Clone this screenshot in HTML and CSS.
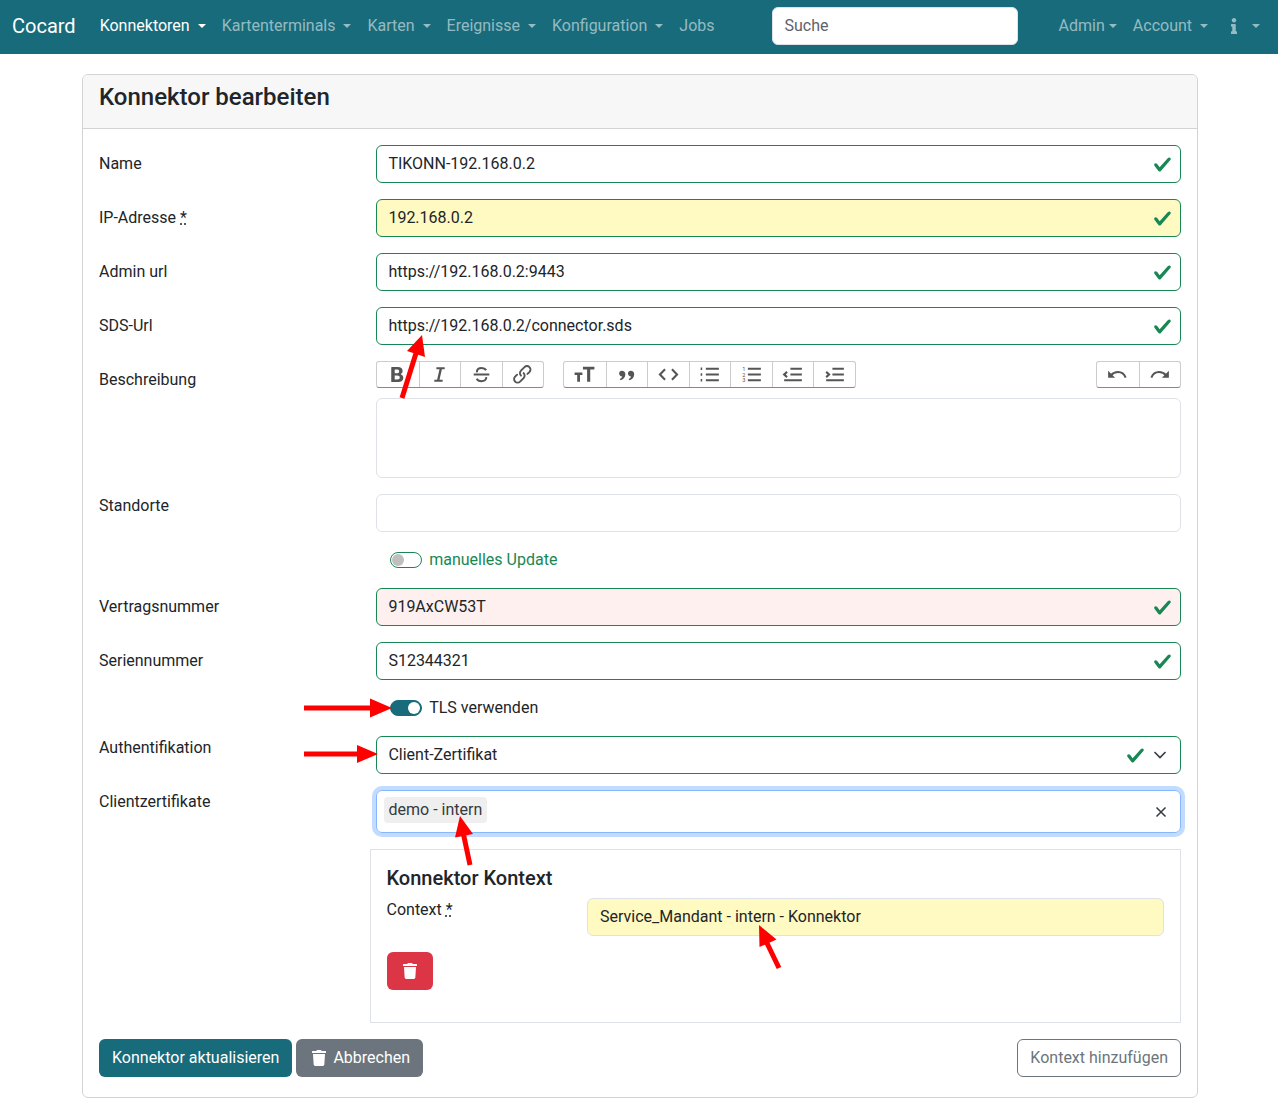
FILE: index.html
```html
<!DOCTYPE html>
<html lang="de">
<head>
<meta charset="utf-8">
<title>Konnektor bearbeiten</title>
<link rel="stylesheet" href="styles.css">
</head>
<body>
<svg width="0" height="0" class="defs">
  <defs>
    <symbol id="check" viewBox="0 0 8 8"><path d="M2.3 6.73.6 4.53c-.4-1.04.46-1.4 1.1-.8l1.1 1.4 3.4-3.8c.6-.63 1.6-.27 1.2.7l-4 4.6c-.43.5-.8.4-1.1.1z"/></symbol>
    <symbol id="trash" viewBox="0 0 448 512"><path d="M432 32H312l-9.4-18.7A24 24 0 0 0 281.1 0H166.8a23.72 23.72 0 0 0-21.4 13.3L136 32H16A16 16 0 0 0 0 48v32a16 16 0 0 0 16 16h416a16 16 0 0 0 16-16V48a16 16 0 0 0-16-16zM53.2 467a48 48 0 0 0 47.9 45h245.8a48 48 0 0 0 47.9-45L416 128H32z"/></symbol>
  </defs>
</svg>
<nav class="navbar">
  <a class="brand">Cocard</a>
  <ul class="nav-list">
    <li class="nav-item active">Konnektoren <span class="caret"></span></li>
    <li class="nav-item">Kartenterminals <span class="caret"></span></li>
    <li class="nav-item">Karten <span class="caret"></span></li>
    <li class="nav-item">Ereignisse <span class="caret"></span></li>
    <li class="nav-item">Konfiguration <span class="caret"></span></li>
    <li class="nav-item">Jobs</li>
  </ul>
  <div class="search">Suche</div>
  <ul class="nav-list nav-right">
    <li class="nav-item">Admin<span class="caret"></span></li>
    <li class="nav-item">Account <span class="caret"></span></li>
    <li class="nav-item nav-info">
      <svg class="info-icon" viewBox="0 0 192 512"><path d="M20 424.229h20V279.771H20c-11.046 0-20-8.954-20-20V212c0-11.046 8.954-20 20-20h112c11.046 0 20 8.954 20 20v212.229h20c11.046 0 20 8.954 20 20V492c0 11.046-8.954 20-20 20H20c-11.046 0-20-8.954-20-20v-47.771c0-11.046 8.954-20 20-20zM96 0C56.235 0 24 32.235 24 72s32.235 72 72 72 72-32.235 72-72S135.764 0 96 0z"/></svg>
      <span class="caret"></span>
    </li>
  </ul>
</nav>

<main class="card">
  <h1 class="card-header">Konnektor bearbeiten</h1>
  <form class="card-body">
    <div class="row">
      <label class="label">Name</label>
      <div class="field valid"><span class="value">TIKONN-192.168.0.2</span><svg class="check"><use href="#check"/></svg></div>
    </div>
    <div class="row">
      <label class="label">IP-Adresse <abbr class="req">*</abbr></label>
      <div class="field valid yellow"><span class="value">192.168.0.2</span><svg class="check"><use href="#check"/></svg></div>
    </div>
    <div class="row">
      <label class="label">Admin url</label>
      <div class="field valid"><span class="value">https://192.168.0.2:9443</span><svg class="check"><use href="#check"/></svg></div>
    </div>
    <div class="row">
      <label class="label">SDS-Url</label>
      <div class="field valid"><span class="value">https://192.168.0.2/connector.sds</span><svg class="check"><use href="#check"/></svg></div>
    </div>
    <div class="row">
      <label class="label">Beschreibung</label>
      <div class="editor-wrap">
        <div class="toolbar">
          <div class="tool-group">
            <span class="tool"><svg viewBox="0 0 24 24"><path d="M6.5 19.2a.5.5 0 0 1-.5-.5V5.4a.5.5 0 0 1 .5-.5h5.8c2.9 0 4.6 1.4 4.6 3.7 0 1.2-.6 2.2-1.5 2.7-.3.2-.3.5 0 .6 1.3.6 2.2 1.7 2.2 3.2 0 2.6-1.9 4.1-5 4.1H6.500ZM9.300 7.300v3.400h2c1.500 0 2.300-.6 2.300-1.700 0-1.100-.7-1.700-2-1.700H9.300Zm0 5.600v3.800h2.400c1.700 0 2.500-.7 2.500-1.900 0-1.200-.9-1.900-2.500-1.900H9.300Z"/></svg></span>
            <span class="tool"><svg viewBox="0 0 24 24"><path d="M9 5h8v2h-2.700l-2.300 10H15v2H7v-2h2.700L12 7H9V5Z"/></svg></span>
            <span class="tool"><svg viewBox="0 0 24 24" class="stroke"><path d="M4.500 12h15M7.600 10c-.4-3.200 2.200-4.300 4.500-4.300 1.900 0 3.500.7 4.400 2.100M16.500 14.500c.4 2.800-2.100 3.900-4.500 3.900-2 0-3.800-.8-4.600-2.300"/></svg></span>
            <span class="tool"><svg viewBox="0 0 24 24"><path d="M9.880 13.700a4.300 4.300 0 0 1 0-6.070l3.370-3.370a4.260 4.260 0 0 1 6.070 0 4.300 4.300 0 0 1 0 6.060l-1.960 1.720a.91.91 0 1 1-1.300-1.300l1.970-1.710a2.460 2.460 0 0 0-3.480-3.480l-3.380 3.370a2.460 2.460 0 0 0 0 3.480.91.91 0 1 1-1.300 1.300z"/><path d="M4.250 19.460a4.300 4.300 0 0 1 0-6.070l1.930-1.900a.91.91 0 1 1 1.300 1.300l-1.930 1.900a2.460 2.460 0 0 0 3.480 3.480l3.370-3.380c.96-.96.96-2.520 0-3.470a.91.91 0 1 1 1.300-1.300 4.300 4.300 0 0 1 0 6.070l-3.380 3.370a4.260 4.260 0 0 1-6.070 0z"/></svg></span>
          </div>
          <div class="tool-group group-mid">
            <span class="tool"><svg viewBox="0 0 24 24"><path d="M10.500 4.500h11v2.800h-4V19h-3V7.300h-4V4.500ZM2.500 10h7.500v2.500H7.700V19H5v-6.500H2.500V10Z"/></svg></span>
            <span class="tool"><svg viewBox="0 0 24 24"><path d="M7.600 8.500c2 0 3.300 1.400 3.300 3.300 0 3.100-2.200 5-4.600 5.700l-.7-1.100c1.100-.6 2-1.400 2.300-2.500-1.800 0-3-1.300-3-2.800 0-1.500 1-2.600 2.700-2.600ZM16.100 8.500c2 0 3.300 1.400 3.300 3.300 0 3.100-2.200 5-4.600 5.700l-.7-1.100c1.100-.6 2-1.400 2.300-2.500-1.800 0-3-1.300-3-2.800 0-1.500 1-2.600 2.700-2.600Z"/></svg></span>
            <span class="tool"><svg viewBox="0 0 24 24" class="stroke"><path d="M8.700 7 3.800 12l4.900 5M15.300 7l4.900 5-4.900 5"/></svg></span>
            <span class="tool"><svg viewBox="0 0 24 24" class="stroke"><path d="M8.500 6.500h12.500M8.500 12h12.500M8.500 17.500h12.500"/><path class="dots" d="M3.500 6.500h1.500M3.500 12h1.500M3.500 17.500h1.500"/></svg></span>
            <span class="tool"><svg viewBox="0 0 24 24" class="stroke"><path d="M8.500 6.500h12.500M8.500 12h12.500M8.500 17.500h12.500"/><text x="3" y="8.500" class="num">1</text><text x="3" y="14" class="num">2</text><text x="3" y="19.500" class="num">3</text></svg></span>
            <span class="tool"><svg viewBox="0 0 24 24" class="stroke"><path d="M10 6.500h11M10 12h11M4 17.500h17M6.800 9.500 4 12l2.800 2.500"/></svg></span>
            <span class="tool"><svg viewBox="0 0 24 24" class="stroke"><path d="M10 6.500h11M10 12h11M4 17.500h17M4 9.500 6.800 12 4 14.500"/></svg></span>
          </div>
          <div class="tool-group group-end">
            <span class="tool"><svg viewBox="0 0 24 24"><path d="M3 8.500v6.700h6.700z"/><path class="arc" d="M5.500 13c1.800-2 4-3.300 7-3.300 3.400 0 6 1.900 7.300 5.300"/></svg></span>
            <span class="tool"><svg viewBox="0 0 24 24"><path d="M21 8.500v6.700h-6.700z"/><path class="arc" d="M18.500 13c-1.800-2-4-3.300-7-3.300-3.400 0-6 1.900-7.300 5.300"/></svg></span>
          </div>
        </div>
        <div class="editor"></div>
      </div>
    </div>
    <div class="row">
      <label class="label label-tight">Standorte</label>
      <div class="field"></div>
    </div>
    <div class="row">
      <span></span>
      <div class="switch-line success"><span class="switch"></span>manuelles Update</div>
    </div>
    <div class="row">
      <label class="label">Vertragsnummer</label>
      <div class="field valid pink"><span class="value">919AxCW53T</span><svg class="check"><use href="#check"/></svg></div>
    </div>
    <div class="row">
      <label class="label">Seriennummer</label>
      <div class="field valid"><span class="value">S12344321</span><svg class="check"><use href="#check"/></svg></div>
    </div>
    <div class="row">
      <span></span>
      <div class="switch-line"><span class="switch on"></span>TLS verwenden</div>
    </div>
    <div class="row">
      <label class="label label-tight">Authentifikation</label>
      <div class="field valid"><span class="value">Client-Zertifikat</span>
        <svg class="check check-select"><use href="#check"/></svg>
        <svg class="chevron" viewBox="0 0 16 16"><path d="m2.500 5 5.500 5.500L13.500 5"/></svg>
      </div>
    </div>
    <div class="row">
      <label class="label label-tight">Clientzertifikate</label>
      <div class="multi">
        <span class="tag">demo - intern</span>
        <svg class="clear" viewBox="0 0 12 12"><path d="m1.500 1.500 9 9M10.500 1.500l-9 9"/></svg>
      </div>
    </div>
    <section class="context">
      <h2 class="context-title">Konnektor Kontext</h2>
      <div class="context-row">
        <label class="label label-tight">Context <abbr class="req">*</abbr></label>
        <div class="field yellow soft"><span class="value">Service_Mandant - intern - Konnektor</span></div>
      </div>
      <button type="button" class="btn btn-danger" aria-label="Löschen"><svg class="btn-icon"><use href="#trash"/></svg></button>
    </section>
    <div class="actions">
      <button type="button" class="btn btn-primary">Konnektor aktualisieren</button>
      <button type="button" class="btn btn-secondary"><svg class="btn-icon"><use href="#trash"/></svg>Abbrechen</button>
      <button type="button" class="btn btn-outline">Kontext hinzufügen</button>
    </div>
  </form>
</main>

<svg class="annotations" viewBox="0 0 1278 1114" aria-hidden="true">
  <line x1="402" y1="398" x2="417" y2="350"/>
  <polygon points="422,335 425,357 407,351"/>
  <line x1="304" y1="708" x2="374" y2="708"/>
  <polygon points="392,708 370,698.500 370,717.500"/>
  <line x1="304" y1="754" x2="360" y2="754"/>
  <polygon points="378,754 357,745 357,763"/>
  <line x1="470" y1="865" x2="463" y2="832"/>
  <polygon points="460,816 473,834 455,837.500"/>
  <line x1="779" y1="968" x2="765" y2="939"/>
  <polygon points="759,925 776.500,939.500 759.500,947"/>
</svg>
</body>
</html>
```

FILE: styles.css
```css
* { box-sizing: border-box; }
html, body { margin: 0; padding: 0; }
body {
  position: relative;
  width: 1278px;
  height: 1114px;
  overflow: hidden;
  background: #fff;
  color: #212529;
  font-family: Roboto, "Liberation Sans", sans-serif;
  font-size: 16px;
  line-height: 24px;
}
.defs { position: absolute; }

.navbar {
  display: flex;
  align-items: center;
  height: 54px;
  padding: 0 12px 2px;
  background: #176b7b;
}
.brand {
  color: #fff;
  font-size: 20px;
  line-height: 30px;
  margin-right: 16px;
}
.nav-list {
  display: flex;
  align-items: center;
  list-style: none;
  margin: 0;
  padding: 0;
}
.nav-item {
  padding: 0 8px;
  color: rgba(255, 255, 255, .55);
  white-space: nowrap;
  display: block;
}
.nav-item.active { color: #fff; }
.caret {
  display: inline-block;
  margin-left: 4px;
  vertical-align: 3px;
  border-top: 4.8px solid currentColor;
  border-left: 4.8px solid transparent;
  border-right: 4.8px solid transparent;
}
.search {
  width: 246px;
  height: 38px;
  margin-left: 49px;
  padding: 6px 12px;
  background: #fff;
  border: 1px solid #dee2e6;
  border-radius: 6px;
  color: #5c636a;
}
.nav-right { margin-left: auto; margin-right: -2px; }
.nav-info { display: flex; align-items: center; margin-left: 7px; }
.info-icon { width: 6px; height: 16px; fill: currentColor; margin-right: 11px; }

.card {
  width: 1116px;
  height: 1024px;
  margin: 20px 0 0 82px;
  border: 1px solid #d3d3d3;
  border-radius: 6px;
}
.card-header {
  margin: 0;
  height: 54px;
  padding: 8px 16px;
  font-size: 24px;
  line-height: 28.8px;
  font-weight: 500;
  background: #f7f7f7;
  border-bottom: 1px solid #d3d3d3;
  border-radius: 5px 5px 0 0;
}
.card-body {
  padding: 16px 16px 0;
  display: flex;
  flex-direction: column;
  gap: 16px;
}
.row {
  display: grid;
  grid-template-columns: 277px 805px;
}
.label { padding-top: 7px; display: block; }
.label-tight { padding-top: 0; }
.req { text-decoration: underline dotted; }

.field {
  display: flex;
  align-items: center;
  height: 38px;
  padding: 0 8px 0 11.4px;
  border: 1px solid #dee2e6;
  border-radius: 6px;
  background: #fff;
}
.field.valid { border-color: #198754; }
.field.yellow { background: #fff9c2; }
.field.pink { background: #fdf0ee; }
.value { flex: 1; }
.check { width: 19px; height: 19px; fill: #198754; flex: none; }
.check-select { margin-right: 7px; }
.chevron { width: 16px; height: 16px; margin-right: 4px; fill: none; stroke: #343a40; stroke-width: 1.6; flex: none; }

.editor-wrap { display: flex; flex-direction: column; gap: 10px; }
.toolbar { display: flex; height: 27px; }
.tool-group {
  display: flex;
  height: 27px;
  border: 1px solid #ccc;
  border-bottom-color: #888;
  border-radius: 3px;
}
.group-mid { margin-left: 19px; }
.group-end { margin-left: auto; }
.tool {
  display: flex;
  align-items: center;
  justify-content: center;
  width: 41.5px;
  height: 25px;
  padding-bottom: 1px;
  border-left: 1px solid #ccc;
}
.tool:first-child { border-left: 0; }
.tool svg { width: 25px; height: 25px; fill: #555; flex: none; }
.tool svg.stroke { fill: none; stroke: #555; stroke-width: 2; }
.tool svg .dots { stroke-width: 2.4; }
.tool svg .num { font-size: 5.5px; font-family: Roboto, sans-serif; fill: #555; stroke: none; }
.tool svg .arc { fill: none; stroke: #555; stroke-width: 1.9; }
.editor {
  height: 80px;
  border: 1px solid #dee2e6;
  border-radius: 6px;
}

.switch-line {
  display: flex;
  align-items: center;
  height: 24px;
  padding-left: 14px;
  margin-left: -.4px;
}
.switch-line.success { color: #198754; }
.switch {
  position: relative;
  width: 32px;
  height: 16px;
  margin-right: 7.6px;
  border: 1px solid #198754;
  border-radius: 8px;
  background: #fff;
}
.switch::after {
  content: "";
  position: absolute;
  left: 1px;
  top: 1px;
  width: 12px;
  height: 12px;
  border-radius: 50%;
  background: #bfbfbf;
}
.switch.on { background: #176b7b; border-color: #176b7b; }
.switch.on::after { left: auto; right: 1px; background: #fff; }

.multi {
  display: flex;
  align-items: center;
  justify-content: space-between;
  height: 43px;
  padding: 0 13px 3px 7px;
  border: 1px solid #86b7fe;
  border-radius: 6px;
  box-shadow: 0 0 0 4px rgba(13, 110, 253, .25);
}
.tag {
  padding: 1px 4.500px;
  background: #efefef;
  border-radius: 4px;
  color: #343a40;
}
.clear { width: 12px; height: 12px; fill: none; stroke: #343a40; stroke-width: 1.5; align-self: center; margin-top: 3px; }

.context {
  margin-left: 271px;
  height: 174px;
  padding: 16px 16px 16px 15.5px;
  border: 1px solid #dee2e6;
}
.context-title {
  margin: 0 0 8px;
  font-size: 20px;
  line-height: 24px;
  font-weight: 500;
}
.context-row {
  display: grid;
  grid-template-columns: 200.5px 577px;
  margin-bottom: 16px;
}
.field.soft { padding-left: 12px; }

.btn {
  display: inline-flex;
  align-items: center;
  justify-content: center;
  height: 38px;
  padding: 0 12px;
  border: 1px solid transparent;
  border-radius: 6px;
  font: inherit;
  color: #fff;
}
.btn-danger { width: 46px; background: #dc3545; }
.btn-primary { background: #176b7b; }
.btn-secondary { background: #6c757d; margin-left: 4px; }
.btn-outline {
  margin-left: auto;
  background: #fff;
  border-color: #6c757d;
  color: #6c757d;
}
.btn-icon { width: 14px; height: 16px; fill: #fff; }
.btn-secondary .btn-icon { margin: 0 7px 0 3px; }
.actions { display: flex; }

.annotations {
  position: absolute;
  left: 0;
  top: 0;
  width: 1278px;
  height: 1114px;
  pointer-events: none;
}
.annotations line { stroke: #f00; stroke-width: 5; }
.annotations polygon { fill: #f00; }
```
